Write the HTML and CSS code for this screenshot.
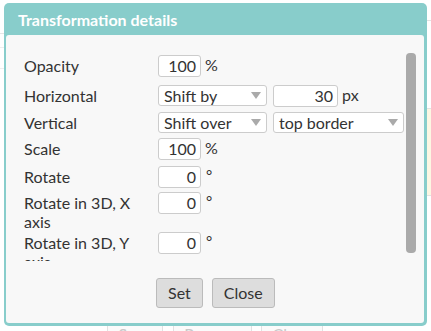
FILE: index.html
```html
<!DOCTYPE html>
<html>
<head>
<meta charset="utf-8">
<link rel="stylesheet" href="styles.css">
</head>
<body>
<div class="page">
  <div class="ghost-line gl1"></div>
  <div class="ghost-line gl2"></div>
  <div class="ghost-line gl3"></div>
  <div class="ghost-line gr1"></div>
  <div class="ghost-note"></div>
  <div class="ghost-buttons">
    <span class="ghost-btn gb-save">Save</span>
    <span class="ghost-btn gb-remove">Remove</span>
    <span class="ghost-btn gb-close">Close</span>
  </div>

  <div class="dialog">
    <div class="title">Transformation details</div>
    <div class="body">
      <div class="scroll">
        <div class="fields">
          <div class="label">Opacity</div>
          <div class="ctrl"><span class="input w43">100</span><span class="unit">%</span></div>

          <div class="label">Horizontal</div>
          <div class="ctrl"><span class="select w109">Shift by<svg class="arrow" width="10" height="7" viewBox="0 0 10 7"><path d="M0 0H10L5 7Z"/></svg></span><span class="input w65 gap6">30</span><span class="unit">px</span></div>

          <div class="label">Vertical</div>
          <div class="ctrl"><span class="select w109">Shift over<svg class="arrow" width="10" height="7" viewBox="0 0 10 7"><path d="M0 0H10L5 7Z"/></svg></span><span class="select w131 gap6">top border<svg class="arrow" width="10" height="7" viewBox="0 0 10 7"><path d="M0 0H10L5 7Z"/></svg></span></div>

          <div class="label">Scale</div>
          <div class="ctrl"><span class="input w43">100</span><span class="unit">%</span></div>

          <div class="label">Rotate</div>
          <div class="ctrl"><span class="input w43">0</span><span class="unit deg">°</span></div>

          <div class="label">Rotate in 3D, X axis</div>
          <div class="ctrl"><span class="input w43">0</span><span class="unit deg">°</span></div>

          <div class="label">Rotate in 3D, Y axis</div>
          <div class="ctrl"><span class="input w43">0</span><span class="unit deg">°</span></div>
        </div>
        <div class="sbar"></div>
      </div>
      <div class="footer">
        <span class="btn">Set</span>
        <span class="btn">Close</span>
      </div>
    </div>
  </div>
</div>
</body>
</html>
```

FILE: styles.css
```css
* { box-sizing: border-box; }
html, body { margin: 0; padding: 0; }
body {
  background: #ffffff;
  font-family: Lato, "Liberation Sans", sans-serif;
  color: #333333;
  width: 431px;
  height: 331px;
  overflow: hidden;
}
.page {
  position: relative;
  width: 431px;
  height: 331px;
  overflow: hidden;
}

/* faint page content behind the dialog */
.ghost-line {
  position: absolute;
  height: 1px;
  background: #e6e6e6;
}
.gl1 { left: 0; top: 33px; width: 10px; }
.gl2 { left: 0; top: 47px; width: 10px; background: #eeeeee; }
.gl3 { left: 0; top: 68px; width: 10px; background: #eeeeee; }
.gr1 { left: 420px; top: 20px; width: 11px; background: #e3e3e3; }
.ghost-note {
  position: absolute;
  left: 420px;
  top: 108px;
  width: 11px;
  height: 88px;
  background: #fdf7e3;
  border-top: 1px solid #e3e3e3;
  border-bottom: 1px solid #e3e3e3;
}
.ghost-buttons {
  position: absolute;
  left: 107px;
  top: 312px;
  height: 19px;
  overflow: hidden;
  display: flex;
  gap: 10px;
}
.ghost-btn {
  height: 19px;
  border: 1px solid #e2e2e2;
  border-bottom: 0;
  background: #fbfbfb;
  color: #c8c8c8;
  font-size: 16px;
  line-height: 18px;
  text-align: center;
  padding-top: 12px;
  overflow: hidden;
}
.gb-save { width: 56px; }
.gb-remove { width: 79px; }
.gb-close { width: 62px; margin-left: -1px; }

/* dialog window */
.dialog {
  position: absolute;
  left: 4px;
  top: 3px;
  width: 423px;
  height: 323px;
  background: #88cdcb;
  border-radius: 5px;
  padding: 0 3px 3px 2px;
  display: flex;
  flex-direction: column;
}
.title {
  height: 32px;
  line-height: 33px;
  padding-left: 12px;
  color: #ffffff;
  font-weight: bold;
  font-size: 16px;
}
.body {
  flex: 1;
  background: #f8f8f8;
  border-radius: 3px;
  display: flex;
  flex-direction: column;
}
.scroll {
  margin-top: 10px;
  height: 216px;
  display: flex;
}
.fields {
  flex: 1;
  overflow: hidden;
  padding: 10px 0 0 18px;
  display: grid;
  grid-template-columns: 134px auto;
  grid-template-rows: 30px 27px 26px 28px 26px 40px 40px;
  align-items: start;
  align-content: start;
}
.label {
  font-size: 16px;
  line-height: 19px;
  padding-top: 1px;
  padding-right: 10px;
  color: #333333;
}
.ctrl {
  display: flex;
  align-items: flex-start;
}
.input {
  display: block;
  height: 22px;
  background: #ffffff;
  border: 1px solid #cccccc;
  border-radius: 3px;
  text-align: right;
  padding-right: 4px;
  font-size: 16px;
  line-height: 20px;
  color: #333333;
}
.select {
  position: relative;
  display: block;
  height: 21px;
  background: #ffffff;
  border: 1px solid #cccccc;
  border-radius: 3px;
  padding-left: 5px;
  font-size: 16px;
  line-height: 19px;
  color: #333333;
}
.arrow {
  position: absolute;
  right: 5px;
  top: 6px;
  fill: #aaaaaa;
}
.w43 { width: 43px; }
.w65 { width: 65px; }
.w109 { width: 109px; }
.w131 { width: 131px; }
.gap6 { margin-left: 6px; }
.unit {
  font-size: 16px;
  line-height: 20px;
  margin-left: 4px;
  color: #333333;
}
.deg {
  font-size: 15px;
  line-height: 18px;
  margin-left: 5px;
}
.sbar {
  width: 10px;
  margin: 8px 8px 8px 0;
  background: #aaaaaa;
  border-radius: 4px;
}
.footer {
  display: flex;
  gap: 9px;
  padding-left: 150px;
  padding-top: 17px;
}
.btn {
  height: 30px;
  background: #dddddd;
  border: 1px solid #bbbbbb;
  border-radius: 3px;
  font-size: 16px;
  line-height: 28px;
  color: #333333;
  padding: 0 11px;
}
```
